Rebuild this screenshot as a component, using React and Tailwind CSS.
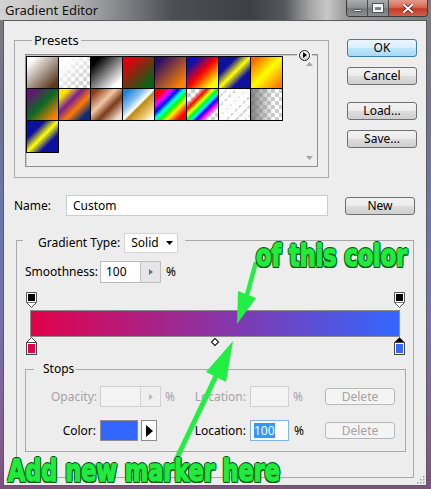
import React from 'react'

// preset swatches, row by row
const SWATCHES = [
  'bg-[image:linear-gradient(135deg,#ffffff_12%,#5b3a20_88%)]',
  'bg-[image:linear-gradient(135deg,#ffffff_15%,rgba(255,255,255,0)_85%),repeating-conic-gradient(#cdcdcd_0_25%,#ffffff_0_50%)] [background-size:100%_100%,8px_8px]',
  'bg-[image:linear-gradient(135deg,#000000_15%,#ffffff_85%)]',
  'bg-[image:linear-gradient(135deg,#e00012_15%,#0a6212_85%)]',
  'bg-[image:linear-gradient(135deg,#2a0c6a_12%,#ff8400_88%)]',
  'bg-[image:linear-gradient(135deg,#1010b0_18%,#ff0000_50%,#ffff00_85%)]',
  'bg-[image:linear-gradient(135deg,#1010a0_28%,#ffff00_50%,#1010a0_72%)]',
  'bg-[image:linear-gradient(135deg,#ff6600_10%,#ffff00_50%,#ff7800_92%)]',
  'bg-[image:linear-gradient(135deg,#6a107a_10%,#0c6a22_50%,#ff8000_90%)]',
  'bg-[image:linear-gradient(135deg,#ffe800_15%,#7a2090_38%,#ff7a00_60%,#0a2a80_85%)]',
  'bg-[image:linear-gradient(135deg,#8a3a12_10%,#f0c8a8_40%,#7a3a18_62%,#f3ddd0_90%)]',
  'bg-[image:linear-gradient(135deg,#2080d0_10%,#8ac0f0_35%,#ffffff_50%,#c08a10_55%,#f0d080_80%,#ffffff_95%)]',
  'bg-[image:linear-gradient(135deg,#ff0000_15%,#ff00ff_27%,#0000ff_38%,#00ffff_48%,#00ff00_58%,#ffff00_68%,#ff8000_76%,#ff0000_86%)]',
  'bg-[image:linear-gradient(135deg,rgba(255,255,255,0)_22%,#ff0000_32%,#ffff00_42%,#00ff00_50%,#00ffff_57%,#0000ff_64%,#ff00ff_72%,rgba(255,255,255,0)_82%),repeating-conic-gradient(#cdcdcd_0_25%,#ffffff_0_50%)] [background-size:100%_100%,8px_8px]',
  'bg-[image:repeating-linear-gradient(135deg,#ffffff_0_5px,rgba(255,255,255,0.2)_5px_7px),repeating-conic-gradient(#cdcdcd_0_25%,#ffffff_0_50%)] [background-size:100%_100%,8px_8px]',
  'bg-[image:linear-gradient(90deg,rgba(110,110,110,0.85)_0%,rgba(200,200,200,0)_75%),repeating-conic-gradient(#cdcdcd_0_25%,#ffffff_0_50%)] [background-size:100%_100%,8px_8px]',
  'bg-[image:linear-gradient(135deg,#0a10a0_28%,#ffff00_50%,#0a10a0_72%)]',
]

const STOPS = [
  { pos: 0, color: '#e3004a', selected: false },
  { pos: 100, color: '#3366ff', selected: true },
]

function Btn({ children, def, disabled, className = '' }) {
  const look = def
    ? 'border-[#3c7fb1] bg-[image:linear-gradient(#eaf6fd_0%,#d9f0fc_50%,#bee6fd_51%,#a7d9f5_100%)] text-black'
    : disabled
      ? 'border-[#b6babd] bg-[#f4f4f4] text-[#a3a3a3]'
      : 'border-[#707070] bg-[image:linear-gradient(#f2f2f2_0%,#ebebeb_50%,#dddddd_51%,#cfcfcf_100%)] text-black'
  return (
    <div className={`w-[70px] flex items-center justify-center rounded-[3px] border leading-none ${look} ${className}`}>
      {children}
    </div>
  )
}

function Spinner({ disabled }) {
  return (
    <div className={`w-[20px] h-full flex items-center justify-center border-l ${disabled ? 'border-[#d5d5d5] bg-[#efefef]' : 'border-[#c5c5c5] bg-[#e6e6e6]'}`}>
      <svg width="4" height="6" viewBox="0 0 4 6"><path d="M0 0 L4 3 L0 6 Z" fill={disabled ? '#b9b9b9' : '#5f6f8a'} /></svg>
    </div>
  )
}

function TopStop() {
  return (
    <svg width="11" height="16" viewBox="0 0 11 16">
      <path d="M0.5 0.5 H10.5 V10.5 L5.5 15.5 L0.5 10.5 Z" fill="#fff" stroke="#555" />
      <rect x="2" y="2" width="7" height="7" fill="#000" />
      <path d="M0.5 10.5 H10.5" stroke="#777" />
    </svg>
  )
}

function BottomStop({ color, selected }) {
  return (
    <svg width="11" height="18" viewBox="0 0 11 18">
      <path d="M5.5 0.5 L10.5 5.5 V17.5 H0.5 V5.5 Z" fill={selected ? '#000' : '#fff'} stroke="#444" />
      <rect x="0.5" y="5.5" width="10" height="12" fill="#fff" stroke="#444" />
      <rect x="2" y="7" width="7" height="9" fill={color} />
    </svg>
  )
}

const GREEN_TEXT = "absolute whitespace-nowrap font-['DejaVu_Sans_Condensed','DejaVu_Sans',sans-serif] font-black text-[30px] text-[#20ec3e] leading-none scale-x-[0.83] origin-left [-webkit-text-stroke:1.3px_#20ec3e] [text-shadow:1.5px_1.5px_0_#0a5a18,-1.5px_-1.5px_0_#0a5a18,1.5px_-1.5px_0_#0a5a18,-1.5px_1.5px_0_#0a5a18,0_1.8px_0_#0a5a18,0_-1.8px_0_#0a5a18,1.8px_0_0_#0a5a18,-1.8px_0_0_#0a5a18]"

export default function App() {
  return (
    <div className="relative w-[431px] h-[489px] flex flex-col overflow-hidden select-none text-[12px] text-black font-['Noto_Sans','Open_Sans',sans-serif] bg-[image:linear-gradient(180deg,#7c7c7e_0%,#70738a_22%,#6a76b0_45%,#7470ae_65%,#83608f_88%,#7d4f7d_100%)]">
      {/* title bar */}
      <div className="h-[20px] flex items-start bg-[image:linear-gradient(90deg,#d2d2d2_0%,#c4c4c4_12%,#95979a_24%,#4c4f54_40%,#3c3f44_58%,#55585c_66%,#a6a6a6_72%,#c8c8c8_76%,#9c9c9c_80%,#7a7c80_100%)]">
        <span className="pl-[5px] pt-[2px] text-[13px] leading-[17px] text-[#111]">Gradient Editor</span>
        <div className="ml-auto mr-[3px] flex h-[17px] border border-t-0 border-[#3b3b3b] rounded-b-[4px] overflow-hidden">
          <div className="w-[21px] flex items-end justify-center pb-[4px] bg-[image:linear-gradient(#a9abae_0%,#8f9296_45%,#75787c_55%,#8c8f93_100%)] border-r border-[#4a4a4a]">
            <div className="w-[9px] h-[3px] bg-[#f4f4f4] border border-[#555] rounded-[1px]" />
          </div>
          <div className="w-[21px] flex items-center justify-center bg-[image:linear-gradient(#a9abae_0%,#8f9296_45%,#75787c_55%,#8c8f93_100%)] border-r border-[#4a4a4a]">
            <div className="w-[10px] h-[8px] border-2 border-t-[3px] border-[#f4f4f4] outline outline-1 outline-[#555]" />
          </div>
          <div className="w-[38px] flex items-center justify-center bg-[image:linear-gradient(#e59a8a_0%,#d46a55_45%,#c13b25_55%,#d0604a_100%)]">
            <svg width="10" height="9" viewBox="0 0 10 9">
              <path d="M1 1 L9 8 M9 1 L1 8" stroke="#5a1a10" strokeWidth="3.4" strokeLinecap="square" />
              <path d="M1 1 L9 8 M9 1 L1 8" stroke="#ffffff" strokeWidth="2" strokeLinecap="square" />
            </svg>
          </div>
        </div>
      </div>

      {/* body */}
      <div className="flex-1 flex pl-[3px] pr-[4px] pb-[3px]">
        <div className="relative flex-1 flex flex-col bg-[#ededed] border border-[#5a5a5a] pl-[10px] pt-[12px]">
          {/* presets + buttons */}
          <div className="flex items-start">
            <fieldset className="relative w-[313px] border border-[#a9a9a9] p-0 m-0">
              <legend className="ml-[17px] px-[2px] leading-[14px] text-[13px]">Presets</legend>
              <div className="absolute left-[282px] top-[1px] w-[15px] h-[14px] flex items-center justify-center bg-[#ededed]">
                <div className="w-[11px] h-[11px] rounded-full border border-[#222] bg-[image:linear-gradient(#ffffff,#cfcfcf)] flex items-center justify-center">
                  <svg width="4" height="6" viewBox="0 0 4 6"><path d="M0 0 L4 3 L0 6 Z" fill="#000" /></svg>
                </div>
              </div>
              <div className="px-[10px] pt-[7px] pb-[10px]">
                <div className="flex w-[293px] h-[113px] border border-[#8f8f8f] shadow-[inset_1px_1px_0_#c9c9c9] bg-[#eeeeee] pt-px">
                  <div className="grid grid-cols-[repeat(8,32px)] auto-rows-[32px] w-[257px] h-[97px]">
                    {SWATCHES.map((cls, i) => (
                      <div key={i} className={`w-[33px] h-[33px] border border-black ${cls}`} />
                    ))}
                  </div>
                  <div className="ml-auto w-[16px] flex flex-col items-center justify-between py-[6px]">
                    <svg width="7" height="4" viewBox="0 0 7 4"><path d="M0 4 L3.5 0 L7 4 Z" fill="#a5a5a5" /></svg>
                    <svg width="7" height="4" viewBox="0 0 7 4"><path d="M0 0 L3.5 4 L7 0 Z" fill="#a5a5a5" /></svg>
                  </div>
                </div>
              </div>
            </fieldset>
            <div className="ml-[18px] mt-[6px] flex flex-col">
              <Btn def className="h-[18px]">OK</Btn>
              <Btn className="h-[18px] mt-[10px]">Cancel</Btn>
              <Btn className="h-[18px] mt-[17px]">Load...</Btn>
              <Btn className="h-[18px] mt-[10px]">Save...</Btn>
            </div>
          </div>

          {/* name row */}
          <div className="mt-[17px] flex items-center h-[21px]">
            <span className="w-[52px]">Name:</span>
            <div className="w-[262px] h-[21px] bg-white border border-[#c9ccd2] flex items-center pl-[6px]">Custom</div>
            <Btn className="h-[18px] ml-[17px]">New</Btn>
          </div>

          {/* gradient group */}
          <fieldset className="mt-[17px] ml-[2px] w-[398px] border border-[#a9a9a9] p-0 m-0">
            <legend className="ml-[6px] pl-[15px] pr-[7px] h-[15px] flex items-start">
              <span className="leading-[20px]">Gradient Type:</span>
              <div className="ml-[4px] w-[54px] h-[20px] shrink-0 bg-white border border-[#d6d6d6] flex items-center pl-[6px]">
                <span>Solid</span>
                <svg className="ml-auto mr-[4px]" width="7" height="4" viewBox="0 0 7 4"><path d="M0 0 L7 0 L3.5 4 Z" fill="#000" /></svg>
              </div>
            </legend>
            <div className="pl-[8px] pt-[13px] pb-[25px]">
              <div className="flex items-center h-[22px]">
                <span className="w-[75px]">Smoothness:</span>
                <div className="w-[61px] h-[22px] flex bg-white border border-[#bdbdbd]">
                  <span className="flex-1 pl-[5px] leading-[20px]">100</span>
                  <Spinner />
                </div>
                <span className="ml-[5px]">%</span>
              </div>

              {/* gradient bar with stops */}
              <div className="mt-[9px] w-[380px] flex flex-col">
                <div className="relative h-[16px]">
                  {STOPS.map((s, i) => (
                    <div key={i} className="absolute top-0" style={{ left: `${0.5 + s.pos * 3.68}px` }}>
                      <TopStop />
                    </div>
                  ))}
                </div>
                <div className="mt-[2px] ml-[5px] w-[370px] h-[27px] border border-[#8d8d8d] bg-[image:linear-gradient(90deg,#e3004a,#3366ff)]" />
                <div className="relative h-[18px]">
                  {STOPS.map((s, i) => (
                    <div key={i} className="absolute top-0" style={{ left: `${0.5 + s.pos * 3.68}px` }}>
                      <BottomStop color={s.color} selected={s.selected} />
                    </div>
                  ))}
                  <div className="absolute left-[187px] top-[2px] w-[6px] h-[6px] rotate-45 bg-white border border-black" />
                </div>
              </div>

              {/* stops group */}
              <fieldset className="mt-[7px] w-[381px] border border-[#a9a9a9] p-0 m-0">
                <legend className="ml-[8px] pl-[9px] pr-[2px] leading-[14px]">Stops</legend>
                <div className="pt-[10px] pb-[10px]">
                  <div className="flex items-center h-[21px] text-[#a3a3a3]">
                    <span className="w-[74px] text-right pr-[3px]">Opacity:</span>
                    <div className="w-[61px] h-[21px] flex border border-[#d0d0d0] bg-[#f3f3f3]">
                      <span className="flex-1" />
                      <Spinner disabled />
                    </div>
                    <span className="w-[30px] pl-[4px]">%</span>
                    <span className="w-[59px] text-right pr-[4px]">Location:</span>
                    <div className="w-[39px] h-[21px] border border-[#d0d0d0] bg-[#f3f3f3]" />
                    <span className="w-[36px] pl-[4px]">%</span>
                    <Btn disabled className="h-[17px]">Delete</Btn>
                  </div>
                  <div className="mt-[13px] flex items-center h-[21px]">
                    <span className="w-[74px] text-right pr-[4px]">Color:</span>
                    <div className="w-[61px] h-[21px] flex items-stretch">
                      <div className="w-[38px] border border-[#8f8f8f] bg-[#3366ff]" />
                      <div className="ml-[3px] w-[16px] border border-[#8a8a8a] bg-white flex items-center justify-center">
                        <svg width="7" height="12" viewBox="0 0 7 12"><path d="M0 0 L7 6 L0 12 Z" fill="#000" /></svg>
                      </div>
                    </div>
                    <span className="w-[30px] pl-[4px]" />
                    <span className="w-[59px] text-right pr-[4px]">Location:</span>
                    <div className="w-[39px] h-[21px] border border-[#7eb4ea] bg-white flex items-center pl-[3px]">
                      <span className="bg-[#3399ff] text-white leading-[15px]">100</span>
                    </div>
                    <span className="w-[36px] pl-[5px]">%</span>
                    <Btn disabled className="h-[17px]">Delete</Btn>
                  </div>
                </div>
              </fieldset>
            </div>
          </fieldset>

          {/* resize grip */}
          <svg className="absolute right-[1px] bottom-[1px]" width="9" height="9" viewBox="0 0 9 9">
            {[[7, 1], [7, 4], [4, 4], [7, 7], [4, 7], [1, 7]].map(([x, y], i) => (
              <rect key={i} x={x} y={y} width="1.5" height="1.5" fill="#9a9a9a" />
            ))}
          </svg>
        </div>
      </div>

      {/* annotations */}
      <svg className="absolute inset-0 pointer-events-none" width="431" height="489" viewBox="0 0 431 489">
        <path d="M256 262 L247 295" stroke="#22ee44" strokeWidth="4.5" />
        <path d="M238 291 L256 298 L237 324 Z" fill="#22ee44" />
        <path d="M175 462 L216 376" stroke="#22ee44" strokeWidth="5" />
        <path d="M206 372 L226 382 L233 341 Z" fill="#22ee44" />
      </svg>
      <span className={`${GREEN_TEXT} left-[256px] top-[241px]`}>of this color</span>
      <span className={`${GREEN_TEXT} left-[8px] top-[456px]`}>Add new marker here</span>
    </div>
  )
}
